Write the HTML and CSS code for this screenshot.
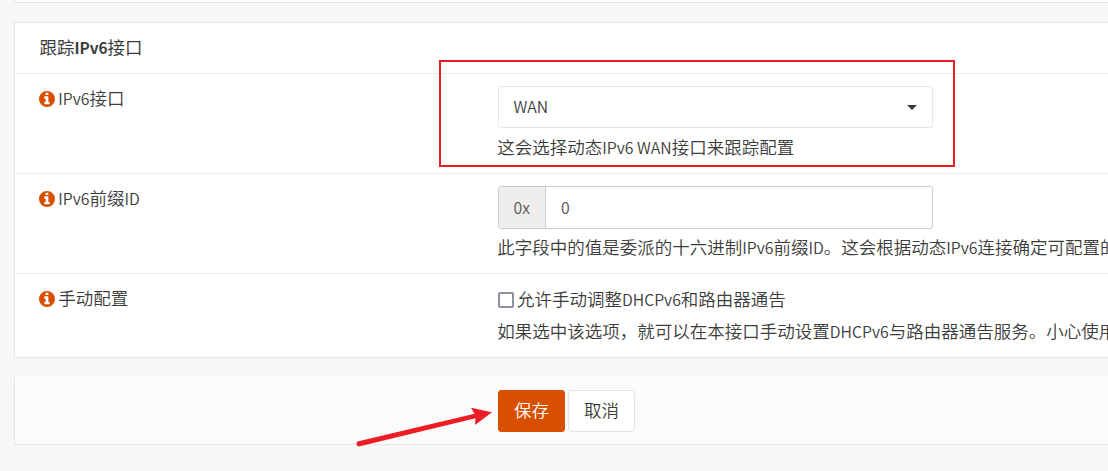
FILE: index.html
```html
<!DOCTYPE html>
<html lang="zh-CN">
<head>
<meta charset="utf-8">
<title>跟踪IPv6接口</title>
<link rel="stylesheet" href="styles.css">
</head>
<body>
<svg class="defs" width="0" height="0">
  <symbol id="info" viewBox="0 0 1536 1536">
    <path fill="currentColor" fill-rule="evenodd" d="M768 0a768 768 0 1 1 0 1536a768 768 0 0 1 0-1536zM1024 1248v-160q0-14-9-23t-23-9h-96V544q0-14-9-23t-23-9H544q-14 0-23 9t-9 23v160q0 14 9 23t23 9h96v320h-96q-14 0-23 9t-9 23v160q0 14 9 23t23 9h448q14 0 23-9t9-23zM896 352V192q0-14-9-23t-23-9H672q-14 0-23 9t-9 23v160q0 14 9 23t23 9h192q14 0 23-9t9-23z"/>
  </symbol>
</svg>
<div class="page">
  <section class="panel panel-above"></section>
  <section class="panel settings">
    <header class="row heading"><b>跟踪<span class="lat">IPv6</span>接口</b></header>
    <div class="row field">
      <div class="label"><svg class="icon"><use href="#info"/></svg><span><span class="lat">IPv6</span>接口</span></div>
      <div class="value">
        <div class="select"><span class="lat">WAN</span><i class="caret"></i></div>
        <p class="help">这会选择动态<span class="lat">IPv6 WAN</span>接口来跟踪配置</p>
      </div>
    </div>
    <div class="row field">
      <div class="label"><svg class="icon"><use href="#info"/></svg><span><span class="lat">IPv6</span>前缀<span class="lat">ID</span></span></div>
      <div class="value">
        <div class="group"><span class="addon lat">0x</span><span class="input lat">0</span></div>
        <p class="help">此字段中的值是委派的十六进制<span class="lat">IPv6</span>前缀<span class="lat">ID</span>。这会根据动态<span class="lat">IPv6</span>连接确定可配置的</p>
      </div>
    </div>
    <div class="row manual">
      <div class="label"><svg class="icon"><use href="#info"/></svg><span>手动配置</span></div>
      <div class="value">
        <div class="check"><i class="box"></i><span>允许手动调整<span class="lat">DHCPv6</span>和路由器通告</span></div>
        <p class="help">如果选中该选项，就可以在本接口手动设置<span class="lat">DHCPv6</span>与路由器通告服务。小心使用</p>
      </div>
    </div>
  </section>
  <footer class="panel actions">
    <div class="btn primary">保存</div>
    <div class="btn">取消</div>
  </footer>
  <div class="highlight"></div>
  <svg class="arrow" width="150" height="50" viewBox="0 0 150 50">
    <path fill="#ee1c25" d="M8.5 41.3L124.5 13.8L121 7.8L142 12.3L125 25L125.6 18.3L9.8 46.3A2.5 2.5 0 0 1 8.5 41.3Z"/>
  </svg>
</div>
</body>
</html>
```
FILE: styles.css
```css
* { box-sizing: border-box; }
body {
  margin: 0;
  height: 471px;
  overflow: hidden;
  background: #f7f7f7;
  color: #3c3c3b;
  font: 350 17.5px/25px "Noto Sans CJK SC", sans-serif;
}
.defs { position: absolute; }
.lat { font-size: 15.8px; }
.page { position: relative; height: 471px; padding-left: 14px; overflow: hidden; }
.panel { background: #fff; border: 1px solid #e5e5e5; border-right: 0; }
.panel-above { height: 3px; border-top: 0; margin-bottom: 19px; }
.settings { height: 336px; margin-bottom: 19px; }
.row { display: flex; padding: 12px 0 0 25px; white-space: nowrap; }
.heading { height: 51px; padding-top: 11px; border-bottom: 1px solid #ececec; }
.heading b { font-weight: 400; margin-left: -0.5px; }
.heading .lat { font-weight: 700; font-size: 15.3px; }
.field { height: 100px; border-bottom: 1px solid #ececec; }
.manual { height: 83px; }
.label { display: flex; flex: 0 0 458px; height: 25px; gap: 3px; line-height: 23px; }
.icon { width: 16px; height: 16px; margin: 4.5px 0 0 -0.7px; color: #d94f00; }
.select, .group { display: flex; align-items: center; width: 435px; border-radius: 3px; }
.select { height: 42px; padding: 0 15px; border: 1px solid #e5e5e5; justify-content: space-between; line-height: 23px; }
.select .lat { margin: -2px 0 0 -0.5px; }
.caret { border: 5px solid transparent; border-top-color: #3c3c3b; border-bottom: 0; }
.group { height: 43px; border: 1px solid #ccc; overflow: hidden; color: #555; }
.addon { width: 47px; height: 100%; padding-left: 14.5px; line-height: 41px; background: #eee; border-right: 1px solid #ccc; }
.input { padding-left: 15px; }
.help { margin: 6px 0 0 -0.7px; }
.group + .help { margin-top: 5px; }
.check { display: flex; gap: 3px; }
.check + .help { margin-top: 6px; }
.box { width: 16px; height: 16px; margin-top: 6px; border: 2px solid #8f8f9d; border-radius: 2px; background: #fff; }
.actions { display: flex; gap: 3px; height: 68px; padding: 13px 0 0 483px; background: #fbfbfb; border-top: 0; }
.btn { width: 67px; height: 42px; line-height: 38px; text-align: center; border: 1px solid #e5e5e5; border-radius: 3px; background: #fff; }
.primary { background: #d94f00; border-color: #d94f00; color: #fff; }
.highlight { position: absolute; left: 439px; top: 60px; width: 516px; height: 107px; border: 2px solid #ee1c25; }
.arrow { position: absolute; left: 350px; top: 400px; }
```
